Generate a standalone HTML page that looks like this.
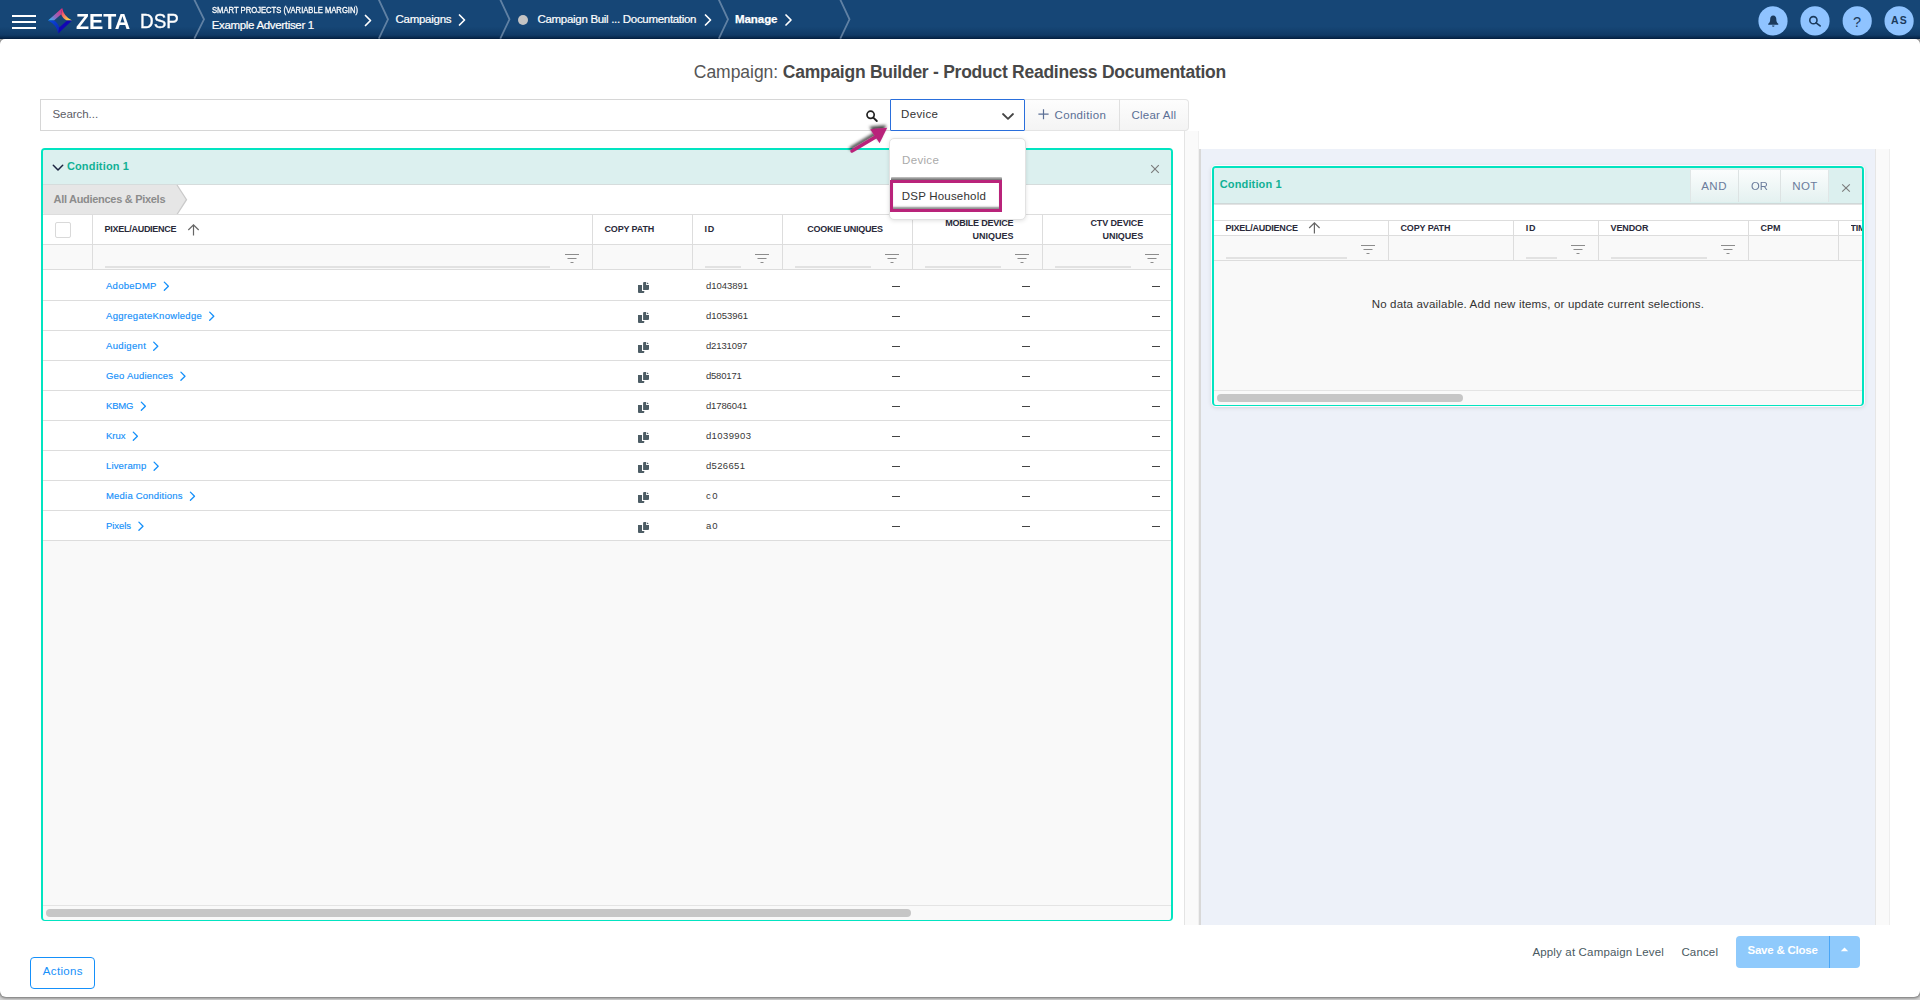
<!DOCTYPE html>
<html lang="en">
<head>
<meta charset="utf-8">
<title>Zeta DSP - Campaign Builder</title>
<style>
*{box-sizing:border-box;margin:0;padding:0}
html,body{width:1920px;height:1000px;overflow:hidden}
body{position:relative;background:#d4d4d4;font-family:"Liberation Sans",sans-serif;}
.a{position:absolute}
.t{position:absolute;white-space:pre;line-height:20px;font-family:"Liberation Sans",sans-serif;z-index:5}
#hdr{left:0;top:0;width:1920px;height:38.6px;background:linear-gradient(#164676 0,#164676 68%,#103a66 90%,#082a50 96%,#031c3c 100%)}
#page{left:0;top:38.6px;width:1920px;height:958.4px;background:#fff;border-radius:5px 5px 6px 6px;box-shadow:0 0 3px 0.5px rgba(0,0,0,.5)}
#shadow{left:0;top:980px;width:1920px;height:20px;background:#d4d4d4}
.hl{background:#ddd;height:1px}
.vl{background:#ddd;width:1px}
.ful{background:#e2e2e2;height:2px}
svg{position:absolute;overflow:visible}
</style>
</head>
<body>
<div class="a" id="shadow"></div>
<div class="a" id="page"></div>
<div class="a" id="hdr"></div>

<!-- ===== header ===== -->
<svg style="left:0;top:0" width="1920" height="40" viewBox="0 0 1920 40">
  <defs>
    <linearGradient id="g1" x1="48" y1="20.6" x2="62" y2="9" gradientUnits="userSpaceOnUse">
      <stop offset="0" stop-color="#1fc0ff"/><stop offset=".45" stop-color="#8f68c0"/><stop offset="1" stop-color="#e82c78"/>
    </linearGradient>
    <linearGradient id="g2" x1="62" y1="10" x2="71" y2="20.6" gradientUnits="userSpaceOnUse">
      <stop offset="0" stop-color="#e82c78"/><stop offset=".5" stop-color="#f98a5c"/><stop offset="1" stop-color="#fff23c"/>
    </linearGradient>
    <linearGradient id="g3" x1="48" y1="20.6" x2="59" y2="33" gradientUnits="userSpaceOnUse">
      <stop offset="0" stop-color="#0a4ad8"/><stop offset="1" stop-color="#0a22b8"/>
    </linearGradient>
  </defs>
  <!-- hamburger -->
  <rect x="12" y="15" width="24" height="2" fill="#fff"/>
  <rect x="12" y="21" width="24" height="2" fill="#fff"/>
  <rect x="12" y="27" width="24" height="2" fill="#fff"/>
  <!-- logo -->
  <path d="M48 20.6 L62.2 8 Q61.6 11.5 61.2 14.2 L54 20.6 Z" fill="url(#g1)"/>
  <path d="M62.2 8 Q63.5 16 72 20.6 L67.2 20.6 Q62.5 18.5 61.2 14.2 Z" fill="url(#g2)"/>
  <path d="M48 20.6 L54 20.6 Q58 23 59.2 27.6 L58.2 33.6 Q57 25 48 20.6 Z" fill="url(#g3)"/>
  <path d="M72 20.6 L58.2 33.6 L59.2 27.6 L67.2 20.6 Z" fill="#1206b4"/>
  <!-- big separators -->
  <g fill="none" stroke="#9fb2ca" stroke-opacity=".55" stroke-width="1.8">
    <path d="M194 -1 L204 19.3 L194.3 38.6"/>
    <path d="M378.5 -1 L388 19.3 L378.8 38.6"/>
    <path d="M500 -1 L509.5 19.3 L500.3 38.6"/>
    <path d="M718.5 -1 L728 19.3 L718.8 38.6"/>
    <path d="M840 -1 L849.5 19.3 L840.3 38.6"/>
  </g>
  <!-- small chevrons -->
  <g fill="none" stroke="#fff" stroke-width="1.7" stroke-linecap="round" stroke-linejoin="round">
    <path d="M365.5 15.5 L370.5 20.5 L365.5 25.5"/>
    <path d="M459.5 15 L464.5 20 L459.5 25"/>
    <path d="M705.5 15 L710.5 20 L705.5 25"/>
    <path d="M786 15 L791 20 L786 25"/>
  </g>
  <circle cx="523" cy="20" r="5" fill="#c4c4c4"/>
  <!-- right icons -->
  <g fill="#8fc3ff">
    <circle cx="1773" cy="20.9" r="14.6"/>
    <circle cx="1815" cy="20.9" r="14.6"/>
    <circle cx="1857.2" cy="20.9" r="14.6"/>
    <circle cx="1899.1" cy="20.9" r="14.6"/>
  </g>
  <!-- bell -->
  <path d="M1773.2 15.4 C1771 15.4 1770.2 17.2 1770.2 19 C1770.2 21.5 1769.6 22.8 1768.2 23.8 L1768.2 24.7 L1778.3 24.7 L1778.3 23.8 C1776.9 22.8 1776.3 21.5 1776.3 19 C1776.3 17.2 1775.4 15.4 1773.2 15.4 Z M1772 25.4 h2.5 a1.25 1.25 0 0 1 -2.5 0 z" fill="#1b3a5c"/>
  <!-- search -->
  <circle cx="1813.4" cy="20.2" r="3.6" fill="none" stroke="#1b3a5c" stroke-width="1.6"/>
  <path d="M1816.1 22.9 L1820.1 25.9" stroke="#1b3a5c" stroke-width="1.7" stroke-linecap="round"/>
</svg>
<span class="t" style="left:1852.9px;top:11.6px;font-size:14.5px;color:#1b3a5c;">?</span>

<!-- ===== toolbar ===== -->
<div class="a" style="left:40px;top:99px;width:851px;height:32px;border:1px solid #d6d6d6;background:#fff"></div>
<div class="a" style="left:1025px;top:99px;width:164px;height:32px;border:1px solid #e4e4e4;border-left:0;border-radius:0 4px 4px 0;background:linear-gradient(#fdfdfd,#f4f4f4)"></div>
<div class="a" style="left:1118.5px;top:99px;width:1px;height:32px;background:#e0e0e0"></div>
<div class="a" style="left:890px;top:99px;width:135px;height:32px;border:1.5px solid #2a6fdc;background:#fff;border-radius:1px"></div>
<svg style="left:0;top:0" width="1920" height="140" viewBox="0 0 1920 140">
  <circle cx="870.6" cy="114.8" r="3.6" fill="none" stroke="#222" stroke-width="1.7"/>
  <path d="M873.3 117.6 L876.8 121" stroke="#222" stroke-width="1.9" stroke-linecap="round"/>
  <path d="M1003 114 L1008 118.8 L1013 114" fill="none" stroke="#444" stroke-width="1.8" stroke-linecap="round" stroke-linejoin="round"/>
  <path d="M1038.4 114.2 H1048.6 M1043.5 109.2 V119.2" stroke="#5b6f95" stroke-width="1.2"/>
</svg>

<!-- ===== left panel ===== -->
<div class="a" style="left:41px;top:148px;width:1132px;height:773px;border:2px solid #02e4c1;border-bottom-width:1.3px;border-radius:4px;background:#f9f9f9"></div>
<div class="a" style="left:43px;top:150px;width:1128px;height:35px;background:#dcf0ef;border-bottom:1px solid #d5dcdc;border-radius:2px 2px 0 0"></div>
<div class="a" style="left:43px;top:185px;width:1128px;height:29.5px;background:#fff"></div>
<div class="a" style="left:43px;top:185px;width:134px;height:29.5px;background:#e6e6e6;border-radius:0 0 0 3px"></div>
<div class="a" style="left:43px;top:214.5px;width:1128px;height:30px;background:#fff"></div>
<div class="a" style="left:43px;top:270px;width:1128px;height:270.5px;background:#fff"></div>
<svg style="left:0;top:0" width="1920" height="1000" viewBox="0 0 1920 1000">
  <path d="M177 185 L186.5 199.7 L177 214.5 Z" fill="#e6e6e6"/>
  <path d="M177 185 L186.5 199.7 L177 214.5" fill="none" stroke="#cacaca" stroke-width="1.3"/>
  <path d="M53.3 165.3 L58 170 L62.7 165.3" fill="none" stroke="#1c2440" stroke-width="1.5" stroke-linecap="round" stroke-linejoin="round"/>
  <path d="M1151.2 165.2 L1158.8 172.9 M1158.8 165.2 L1151.2 172.9" stroke="#7c7c7c" stroke-width="1.15"/>
  <!-- sort arrow -->
  <path d="M193.5 235.5 V225 M188.3 230 L193.5 224.8 L198.7 230" fill="none" stroke="#666" stroke-width="1.2"/>
</svg>
<!-- checkbox -->
<div class="a" style="left:55px;top:222px;width:16px;height:16px;border:1px solid #d9d9d9;border-radius:2px;background:#fff"></div>
<!-- horizontal lines -->
<div class="a hl" style="left:43px;top:214px;width:1128px"></div>
<div class="a hl" style="left:43px;top:244px;width:1128px"></div>
<div class="a hl" style="left:43px;top:269px;width:1128px"></div>
<div class="a hl" style="left:43px;top:300px;width:1128px"></div>
<div class="a hl" style="left:43px;top:330px;width:1128px"></div>
<div class="a hl" style="left:43px;top:360px;width:1128px"></div>
<div class="a hl" style="left:43px;top:390px;width:1128px"></div>
<div class="a hl" style="left:43px;top:420px;width:1128px"></div>
<div class="a hl" style="left:43px;top:450px;width:1128px"></div>
<div class="a hl" style="left:43px;top:480px;width:1128px"></div>
<div class="a hl" style="left:43px;top:510px;width:1128px"></div>
<div class="a hl" style="left:43px;top:540px;width:1128px"></div>


<!-- vertical lines -->
<div class="a vl" style="left:92px;top:215px;height:55px"></div>
<div class="a vl" style="left:592px;top:215px;height:55px"></div>
<div class="a vl" style="left:692px;top:215px;height:55px"></div>
<div class="a vl" style="left:782px;top:215px;height:55px"></div>
<div class="a vl" style="left:912px;top:215px;height:55px"></div>
<div class="a vl" style="left:1042px;top:215px;height:55px"></div>
<!-- filter underlines -->
<div class="a ful" style="left:105px;top:266px;width:445px"></div>
<div class="a ful" style="left:705px;top:266px;width:36px"></div>
<div class="a ful" style="left:795px;top:266px;width:76px"></div>
<div class="a ful" style="left:925px;top:266px;width:76px"></div>
<div class="a ful" style="left:1055px;top:266px;width:76px"></div>
<svg style="left:565.0px;top:253.0px" width="14" height="11" viewBox="0 0 14 11"><path d="M0 1.5 H14 M2.5 5.5 H11.5 M5.5 9.5 H8.5" stroke="#8c8c8c" stroke-width="1" fill="none"/></svg>
<svg style="left:755.0px;top:253.0px" width="14" height="11" viewBox="0 0 14 11"><path d="M0 1.5 H14 M2.5 5.5 H11.5 M5.5 9.5 H8.5" stroke="#8c8c8c" stroke-width="1" fill="none"/></svg>
<svg style="left:885.0px;top:253.0px" width="14" height="11" viewBox="0 0 14 11"><path d="M0 1.5 H14 M2.5 5.5 H11.5 M5.5 9.5 H8.5" stroke="#8c8c8c" stroke-width="1" fill="none"/></svg>
<svg style="left:1015.0px;top:253.0px" width="14" height="11" viewBox="0 0 14 11"><path d="M0 1.5 H14 M2.5 5.5 H11.5 M5.5 9.5 H8.5" stroke="#8c8c8c" stroke-width="1" fill="none"/></svg>
<svg style="left:1145.0px;top:253.0px" width="14" height="11" viewBox="0 0 14 11"><path d="M0 1.5 H14 M2.5 5.5 H11.5 M5.5 9.5 H8.5" stroke="#8c8c8c" stroke-width="1" fill="none"/></svg>


<svg style="left:0;top:0" width="1920" height="1000" viewBox="0 0 1920 1000">
<path d="M164.3 282.1 l4.1 4.1 l-4.1 4.1" fill="none" stroke="#1590fa" stroke-width="1.3" stroke-linecap="round" stroke-linejoin="round"/>
<g transform="translate(0 0)" fill="#4d5d65"><path d="M638 285 H642 V290.9 H644.3 V292 Q644.3 293 643.3 293 H639 Q638 293 638 292 Z"/><path d="M643.1 283 Q643.1 282 644.1 282 H646.1 V284.9 H649 V289.1 Q649 290.1 648 290.1 H643.1 Z"/><path d="M646.9 282.2 L648.8 284.1 H646.9 Z"/></g>
<rect x="892" y="286.0" width="8" height="1" fill="#444"/>
<rect x="1022" y="286.0" width="8" height="1" fill="#444"/>
<rect x="1152" y="286.0" width="8" height="1" fill="#444"/>
<path d="M209.7 312.1 l4.1 4.1 l-4.1 4.1" fill="none" stroke="#1590fa" stroke-width="1.3" stroke-linecap="round" stroke-linejoin="round"/>
<g transform="translate(0 30)" fill="#4d5d65"><path d="M638 285 H642 V290.9 H644.3 V292 Q644.3 293 643.3 293 H639 Q638 293 638 292 Z"/><path d="M643.1 283 Q643.1 282 644.1 282 H646.1 V284.9 H649 V289.1 Q649 290.1 648 290.1 H643.1 Z"/><path d="M646.9 282.2 L648.8 284.1 H646.9 Z"/></g>
<rect x="892" y="316.0" width="8" height="1" fill="#444"/>
<rect x="1022" y="316.0" width="8" height="1" fill="#444"/>
<rect x="1152" y="316.0" width="8" height="1" fill="#444"/>
<path d="M153.7 342.1 l4.1 4.1 l-4.1 4.1" fill="none" stroke="#1590fa" stroke-width="1.3" stroke-linecap="round" stroke-linejoin="round"/>
<g transform="translate(0 60)" fill="#4d5d65"><path d="M638 285 H642 V290.9 H644.3 V292 Q644.3 293 643.3 293 H639 Q638 293 638 292 Z"/><path d="M643.1 283 Q643.1 282 644.1 282 H646.1 V284.9 H649 V289.1 Q649 290.1 648 290.1 H643.1 Z"/><path d="M646.9 282.2 L648.8 284.1 H646.9 Z"/></g>
<rect x="892" y="346.0" width="8" height="1" fill="#444"/>
<rect x="1022" y="346.0" width="8" height="1" fill="#444"/>
<rect x="1152" y="346.0" width="8" height="1" fill="#444"/>
<path d="M180.9 372.1 l4.1 4.1 l-4.1 4.1" fill="none" stroke="#1590fa" stroke-width="1.3" stroke-linecap="round" stroke-linejoin="round"/>
<g transform="translate(0 90)" fill="#4d5d65"><path d="M638 285 H642 V290.9 H644.3 V292 Q644.3 293 643.3 293 H639 Q638 293 638 292 Z"/><path d="M643.1 283 Q643.1 282 644.1 282 H646.1 V284.9 H649 V289.1 Q649 290.1 648 290.1 H643.1 Z"/><path d="M646.9 282.2 L648.8 284.1 H646.9 Z"/></g>
<rect x="892" y="376.0" width="8" height="1" fill="#444"/>
<rect x="1022" y="376.0" width="8" height="1" fill="#444"/>
<rect x="1152" y="376.0" width="8" height="1" fill="#444"/>
<path d="M141.3 402.1 l4.1 4.1 l-4.1 4.1" fill="none" stroke="#1590fa" stroke-width="1.3" stroke-linecap="round" stroke-linejoin="round"/>
<g transform="translate(0 120)" fill="#4d5d65"><path d="M638 285 H642 V290.9 H644.3 V292 Q644.3 293 643.3 293 H639 Q638 293 638 292 Z"/><path d="M643.1 283 Q643.1 282 644.1 282 H646.1 V284.9 H649 V289.1 Q649 290.1 648 290.1 H643.1 Z"/><path d="M646.9 282.2 L648.8 284.1 H646.9 Z"/></g>
<rect x="892" y="406.0" width="8" height="1" fill="#444"/>
<rect x="1022" y="406.0" width="8" height="1" fill="#444"/>
<rect x="1152" y="406.0" width="8" height="1" fill="#444"/>
<path d="M133.3 432.1 l4.1 4.1 l-4.1 4.1" fill="none" stroke="#1590fa" stroke-width="1.3" stroke-linecap="round" stroke-linejoin="round"/>
<g transform="translate(0 150)" fill="#4d5d65"><path d="M638 285 H642 V290.9 H644.3 V292 Q644.3 293 643.3 293 H639 Q638 293 638 292 Z"/><path d="M643.1 283 Q643.1 282 644.1 282 H646.1 V284.9 H649 V289.1 Q649 290.1 648 290.1 H643.1 Z"/><path d="M646.9 282.2 L648.8 284.1 H646.9 Z"/></g>
<rect x="892" y="436.0" width="8" height="1" fill="#444"/>
<rect x="1022" y="436.0" width="8" height="1" fill="#444"/>
<rect x="1152" y="436.0" width="8" height="1" fill="#444"/>
<path d="M154.1 462.1 l4.1 4.1 l-4.1 4.1" fill="none" stroke="#1590fa" stroke-width="1.3" stroke-linecap="round" stroke-linejoin="round"/>
<g transform="translate(0 180)" fill="#4d5d65"><path d="M638 285 H642 V290.9 H644.3 V292 Q644.3 293 643.3 293 H639 Q638 293 638 292 Z"/><path d="M643.1 283 Q643.1 282 644.1 282 H646.1 V284.9 H649 V289.1 Q649 290.1 648 290.1 H643.1 Z"/><path d="M646.9 282.2 L648.8 284.1 H646.9 Z"/></g>
<rect x="892" y="466.0" width="8" height="1" fill="#444"/>
<rect x="1022" y="466.0" width="8" height="1" fill="#444"/>
<rect x="1152" y="466.0" width="8" height="1" fill="#444"/>
<path d="M190.4 492.1 l4.1 4.1 l-4.1 4.1" fill="none" stroke="#1590fa" stroke-width="1.3" stroke-linecap="round" stroke-linejoin="round"/>
<g transform="translate(0 210)" fill="#4d5d65"><path d="M638 285 H642 V290.9 H644.3 V292 Q644.3 293 643.3 293 H639 Q638 293 638 292 Z"/><path d="M643.1 283 Q643.1 282 644.1 282 H646.1 V284.9 H649 V289.1 Q649 290.1 648 290.1 H643.1 Z"/><path d="M646.9 282.2 L648.8 284.1 H646.9 Z"/></g>
<rect x="892" y="496.0" width="8" height="1" fill="#444"/>
<rect x="1022" y="496.0" width="8" height="1" fill="#444"/>
<rect x="1152" y="496.0" width="8" height="1" fill="#444"/>
<path d="M138.9 522.1 l4.1 4.1 l-4.1 4.1" fill="none" stroke="#1590fa" stroke-width="1.3" stroke-linecap="round" stroke-linejoin="round"/>
<g transform="translate(0 240)" fill="#4d5d65"><path d="M638 285 H642 V290.9 H644.3 V292 Q644.3 293 643.3 293 H639 Q638 293 638 292 Z"/><path d="M643.1 283 Q643.1 282 644.1 282 H646.1 V284.9 H649 V289.1 Q649 290.1 648 290.1 H643.1 Z"/><path d="M646.9 282.2 L648.8 284.1 H646.9 Z"/></g>
<rect x="892" y="526.0" width="8" height="1" fill="#444"/>
<rect x="1022" y="526.0" width="8" height="1" fill="#444"/>
<rect x="1152" y="526.0" width="8" height="1" fill="#444"/>
</svg>


<!-- bottom scrollbar -->
<div class="a hl" style="left:43px;top:905px;width:1128px;background:#e4e4e4"></div>
<div class="a" style="left:46px;top:909px;width:865px;height:8px;border-radius:4px;background:#c6c6c6"></div>

<!-- ===== splitter & right panel ===== -->
<div class="a" style="left:1184px;top:131px;width:15px;height:794px;background:#fafafa;border-left:1px solid #e4e4e4;border-right:1px solid #f0f0f0"></div>
<div class="a" style="left:1199px;top:149px;width:676px;height:776px;background:#edf1f9;border-left:2px solid #d8d8d8"></div>
<div class="a" style="left:1875px;top:149px;width:15px;height:776px;background:#fafafa;border-left:1px solid #e6e6e6;border-right:1px solid #eee"></div>
<!-- right card -->
<div class="a" style="left:1212px;top:166px;width:1652px;max-width:652px;height:240.2px;border:2px solid #02e4c1;border-bottom-width:1.2px;border-radius:4px;background:#f9f9f9;box-shadow:0 0 0 1px rgba(255,255,255,.9),0 1px 5px rgba(0,0,0,.16)"></div>
<div class="a" style="left:1214px;top:168px;width:648px;height:36px;background:#dcf0ef;border-bottom:1px solid #cfd8d8;box-shadow:0 1px 2px rgba(0,0,0,.12);border-radius:2px 2px 0 0"></div>
<div class="a" style="left:1214px;top:204.5px;width:648px;height:31px;background:#fff"></div>
<div class="a" style="left:1689.5px;top:169.5px;width:139.5px;height:32.5px;background:linear-gradient(#fbfdfd,#e4f1f0);border-left:1px solid #e0e6e6;border-right:1px solid #e0e6e6"></div>
<div class="a" style="left:1738px;top:169.5px;width:1px;height:32.5px;background:#dde3e3"></div>
<div class="a" style="left:1780px;top:169.5px;width:1px;height:32.5px;background:#dde3e3"></div>
<div class="a hl" style="left:1214px;top:220px;width:648px"></div>
<div class="a hl" style="left:1214px;top:235px;width:648px"></div>
<div class="a hl" style="left:1214px;top:260px;width:648px"></div>
<div class="a hl" style="left:1214px;top:390px;width:648px;background:#e4e4e4"></div>
<div class="a vl" style="left:1388px;top:221px;height:39px"></div>
<div class="a vl" style="left:1513px;top:221px;height:39px"></div>
<div class="a vl" style="left:1598px;top:221px;height:39px"></div>
<div class="a vl" style="left:1748px;top:221px;height:39px"></div>
<div class="a vl" style="left:1838px;top:221px;height:39px"></div>
<div class="a ful" style="left:1226px;top:257px;width:121px;height:1.5px"></div>
<div class="a ful" style="left:1526px;top:257px;width:31px;height:1.5px"></div>
<div class="a ful" style="left:1611px;top:257px;width:96px;height:1.5px"></div>
<div class="a" style="left:1217px;top:394px;width:246px;height:8px;border-radius:4px;background:#c6c6c6"></div>
<div class="a" style="left:1851px;top:217.8px;width:11px;height:20px;overflow:hidden"><span class="t" style="left:-0.5px;top:0;font-size:9px;font-weight:700;color:#2a2a3a;letter-spacing:-.2px">TIME</span></div>
<svg style="left:0;top:0" width="1920" height="420" viewBox="0 0 1920 420">
  <path d="M1842.2 184.3 L1849.8 191.6 M1849.8 184.3 L1842.2 191.6" stroke="#7c7c7c" stroke-width="1.15"/>
  <path d="M1314.4 233.5 V223 M1309.2 228 L1314.4 222.8 L1319.6 228" fill="none" stroke="#666" stroke-width="1.2"/>
</svg>
<svg style="left:1361.0px;top:244.0px" width="14" height="11" viewBox="0 0 14 11"><path d="M0 1.5 H14 M2.5 5.5 H11.5 M5.5 9.5 H8.5" stroke="#8c8c8c" stroke-width="1" fill="none"/></svg>
<svg style="left:1571.0px;top:244.0px" width="14" height="11" viewBox="0 0 14 11"><path d="M0 1.5 H14 M2.5 5.5 H11.5 M5.5 9.5 H8.5" stroke="#8c8c8c" stroke-width="1" fill="none"/></svg>
<svg style="left:1721.0px;top:244.0px" width="14" height="11" viewBox="0 0 14 11"><path d="M0 1.5 H14 M2.5 5.5 H11.5 M5.5 9.5 H8.5" stroke="#8c8c8c" stroke-width="1" fill="none"/></svg>



<!-- ===== bottom bar ===== -->
<div class="a" style="left:30px;top:957px;width:65px;height:32px;border:1.5px solid #1590fa;border-radius:4px;background:#fff"></div>
<div class="a" style="left:1736px;top:936px;width:124px;height:32px;border-radius:4px;background:#8fcafc"></div>
<div class="a" style="left:1829px;top:936px;width:1px;height:32px;background:#4aa6f6"></div>
<svg style="left:0;top:0" width="1920" height="1000" viewBox="0 0 1920 1000"><path d="M1840.8 951.2 L1844.5 947.6 L1848.2 951.2 Z" fill="#fff"/></svg>

<!-- ===== dropdown overlay ===== -->
<div class="a" style="left:889px;top:138px;width:137px;height:81.5px;background:#fff;border:1px solid #e2e2e2;border-radius:5px;box-shadow:0 1px 4px rgba(0,0,0,.12);z-index:20"></div>
<div class="a" style="left:890.5px;top:177px;width:111.5px;height:5px;background:linear-gradient(#c8c8c8,#6a6a6a 60%,#555);z-index:21;border-radius:1px 1px 0 0"></div>
<div class="a" style="left:890px;top:180px;width:112px;height:32px;border:3px solid #b9237a;background:#fff;z-index:22;box-shadow:inset 0 -3px 2px -1px rgba(0,0,0,.45)"></div>
<svg style="left:0;top:0;z-index:25" width="1920" height="240" viewBox="0 0 1920 240">
  <defs><filter id="sh" x="-30%" y="-30%" width="160%" height="160%"><feDropShadow dx="-0.8" dy="-2.6" stdDeviation="1.5" flood-color="#000" flood-opacity=".75"/></filter></defs>
  <g filter="url(#sh)">
    <path d="M852 151 L876 136.8" stroke="#b9237a" stroke-width="3.5" stroke-linecap="round"/>
    <path d="M870.2 129.3 L887.2 127.8 L879.6 143.2 Z" fill="#b9237a"/>
  </g>
</svg>

<span class="t" style="left:76.1px;top:12.00px;font-size:22.5px;font-weight:700;color:#fff;transform-origin:0 50%;transform:scaleX(0.9478);">ZETA</span>
<span class="t" style="left:139.5px;top:11.00px;font-size:20.5px;font-weight:400;color:#fff;transform-origin:0 50%;transform:scaleX(0.9204);-webkit-text-stroke:.35px #fff;">DSP</span>
<span class="t" style="left:211.5px;top:0.00px;font-size:9px;font-weight:400;color:#fff;transform-origin:0 50%;transform:scaleX(0.8487);-webkit-text-stroke:.3px #fff;">SMART PROJECTS (VARIABLE MARGIN)</span>
<span class="t" style="left:211.7px;top:15.00px;font-size:11.5px;font-weight:400;color:#fff;letter-spacing:-0.325px;-webkit-text-stroke:.2px #fff;">Example Advertiser 1</span>
<span class="t" style="left:395.5px;top:9.00px;font-size:11.5px;font-weight:400;color:#fff;letter-spacing:-0.271px;-webkit-text-stroke:.2px #fff;">Campaigns</span>
<span class="t" style="left:537.5px;top:9.00px;font-size:11.5px;font-weight:400;color:#fff;letter-spacing:-0.304px;-webkit-text-stroke:.2px #fff;">Campaign Buil ... Documentation</span>
<span class="t" style="left:735.0px;top:9.00px;font-size:11.5px;font-weight:700;color:#fff;letter-spacing:-0.066px;-webkit-text-stroke:.25px #fff;">Manage</span>
<span class="t" style="left:1891.0px;top:10.00px;font-size:10.5px;font-weight:700;color:#1b3a5c;letter-spacing:1.206px;">AS</span>
<span class="t" style="left:693.8px;top:62.00px;font-size:17.5px;font-weight:400;color:#555;letter-spacing:-0.030px;">Campaign:</span>
<span class="t" style="left:782.8px;top:62.00px;font-size:17.5px;font-weight:700;color:#484848;letter-spacing:-0.258px;">Campaign Builder - Product Readiness Documentation</span>
<span class="t" style="left:52.5px;top:104.00px;font-size:11.5px;font-weight:400;color:#5c5c66;letter-spacing:-0.054px;">Search...</span>
<span class="t" style="left:901.0px;top:104.00px;font-size:11.5px;font-weight:400;color:#333;letter-spacing:0.369px;">Device</span>
<span class="t" style="left:1054.5px;top:105.00px;font-size:11.5px;font-weight:400;color:#5b6f95;letter-spacing:0.338px;">Condition</span>
<span class="t" style="left:1131.5px;top:105.00px;font-size:11.5px;font-weight:400;color:#5b6f95;letter-spacing:0.221px;">Clear All</span>
<span class="t" style="left:66.9px;top:156.00px;font-size:11px;font-weight:700;color:#11b095;letter-spacing:0.160px;">Condition 1</span>
<span class="t" style="left:53.5px;top:189.00px;font-size:11px;font-weight:700;color:#8c8c8c;letter-spacing:-0.295px;">All Audiences &amp; Pixels</span>
<span class="t" style="left:104.6px;top:219.00px;font-size:9px;font-weight:700;color:#2a2a3a;letter-spacing:-0.278px;">PIXEL/AUDIENCE</span>
<span class="t" style="left:604.5px;top:219.00px;font-size:9px;font-weight:700;color:#2a2a3a;letter-spacing:-0.152px;">COPY PATH</span>
<span class="t" style="left:704.5px;top:219.00px;font-size:9px;font-weight:700;color:#2a2a3a;letter-spacing:0.800px;">ID</span>
<span class="t" style="left:807.3px;top:219.00px;font-size:9px;font-weight:700;color:#2a2a3a;letter-spacing:-0.255px;">COOKIE UNIQUES</span>
<span class="t" style="left:945.3px;top:213.00px;font-size:9px;font-weight:700;color:#2a2a3a;letter-spacing:-0.235px;">MOBILE DEVICE</span>
<span class="t" style="left:972.5px;top:226.00px;font-size:9px;font-weight:700;color:#2a2a3a;letter-spacing:-0.003px;">UNIQUES</span>
<span class="t" style="left:1090.5px;top:213.00px;font-size:9px;font-weight:700;color:#2a2a3a;letter-spacing:-0.146px;">CTV DEVICE</span>
<span class="t" style="left:1102.5px;top:226.00px;font-size:9px;font-weight:700;color:#2a2a3a;letter-spacing:-0.053px;">UNIQUES</span>
<span class="t" style="left:106.0px;top:276.00px;font-size:9.5px;font-weight:400;color:#1590fa;letter-spacing:0.258px;-webkit-text-stroke:.15px #1590fa;">AdobeDMP</span>
<span class="t" style="left:705.9px;top:276.00px;font-size:9.5px;font-weight:400;color:#383838;letter-spacing:-0.026px;">d1043891</span>
<span class="t" style="left:106.0px;top:306.00px;font-size:9.5px;font-weight:400;color:#1590fa;letter-spacing:0.291px;-webkit-text-stroke:.15px #1590fa;">AggregateKnowledge</span>
<span class="t" style="left:705.9px;top:306.00px;font-size:9.5px;font-weight:400;color:#383838;letter-spacing:-0.026px;">d1053961</span>
<span class="t" style="left:106.0px;top:336.00px;font-size:9.5px;font-weight:400;color:#1590fa;letter-spacing:0.326px;-webkit-text-stroke:.15px #1590fa;">Audigent</span>
<span class="t" style="left:705.9px;top:336.00px;font-size:9.5px;font-weight:400;color:#383838;letter-spacing:-0.112px;">d2131097</span>
<span class="t" style="left:106.0px;top:366.00px;font-size:9.5px;font-weight:400;color:#1590fa;letter-spacing:0.214px;-webkit-text-stroke:.15px #1590fa;">Geo Audiences</span>
<span class="t" style="left:705.9px;top:366.00px;font-size:9.5px;font-weight:400;color:#383838;letter-spacing:-0.181px;">d580171</span>
<span class="t" style="left:106.0px;top:396.00px;font-size:9.5px;font-weight:400;color:#1590fa;letter-spacing:-0.195px;-webkit-text-stroke:.15px #1590fa;">KBMG</span>
<span class="t" style="left:705.9px;top:396.00px;font-size:9.5px;font-weight:400;color:#383838;letter-spacing:-0.112px;">d1786041</span>
<span class="t" style="left:106.0px;top:426.00px;font-size:9.5px;font-weight:400;color:#1590fa;letter-spacing:-0.049px;-webkit-text-stroke:.15px #1590fa;">Krux</span>
<span class="t" style="left:705.9px;top:426.00px;font-size:9.5px;font-weight:400;color:#383838;letter-spacing:0.403px;">d1039903</span>
<span class="t" style="left:106.0px;top:456.00px;font-size:9.5px;font-weight:400;color:#1590fa;letter-spacing:0.160px;-webkit-text-stroke:.15px #1590fa;">Liveramp</span>
<span class="t" style="left:705.9px;top:456.00px;font-size:9.5px;font-weight:400;color:#383838;letter-spacing:0.353px;">d526651</span>
<span class="t" style="left:106.0px;top:486.00px;font-size:9.5px;font-weight:400;color:#1590fa;letter-spacing:0.206px;-webkit-text-stroke:.15px #1590fa;">Media Conditions</span>
<span class="t" style="left:705.9px;top:486.00px;font-size:9.5px;font-weight:400;color:#383838;letter-spacing:1.553px;">c0</span>
<span class="t" style="left:106.0px;top:516.00px;font-size:9.5px;font-weight:400;color:#1590fa;letter-spacing:-0.069px;-webkit-text-stroke:.15px #1590fa;">Pixels</span>
<span class="t" style="left:705.9px;top:516.00px;font-size:9.5px;font-weight:400;color:#383838;letter-spacing:1.022px;">a0</span>
<span class="t" style="left:1219.7px;top:174.00px;font-size:11px;font-weight:700;color:#11b095;letter-spacing:0.150px;">Condition 1</span>
<span class="t" style="left:1701.2px;top:176.00px;font-size:11.5px;font-weight:400;color:#6b7c9c;letter-spacing:0.509px;">AND</span>
<span class="t" style="left:1751.0px;top:176.00px;font-size:11.5px;font-weight:400;color:#6b7c9c;transform-origin:0 50%;transform:scaleX(0.9797);">OR</span>
<span class="t" style="left:1792.3px;top:176.00px;font-size:11.5px;font-weight:400;color:#6b7c9c;letter-spacing:0.359px;">NOT</span>
<span class="t" style="left:1225.5px;top:218.00px;font-size:9px;font-weight:700;color:#2a2a3a;letter-spacing:-0.240px;">PIXEL/AUDIENCE</span>
<span class="t" style="left:1400.5px;top:218.00px;font-size:9px;font-weight:700;color:#2a2a3a;letter-spacing:-0.127px;">COPY PATH</span>
<span class="t" style="left:1525.7px;top:218.00px;font-size:9px;font-weight:700;color:#2a2a3a;letter-spacing:0.800px;">ID</span>
<span class="t" style="left:1610.5px;top:218.00px;font-size:9px;font-weight:700;color:#2a2a3a;letter-spacing:-0.103px;">VENDOR</span>
<span class="t" style="left:1760.5px;top:218.00px;font-size:9px;font-weight:700;color:#2a2a3a;letter-spacing:0.000px;">CPM</span>
<span class="t" style="left:1371.7px;top:294.00px;font-size:11.5px;font-weight:400;color:#333;letter-spacing:0.173px;">No data available. Add new items, or update current selections.</span>
<span class="t" style="left:42.8px;top:961.00px;font-size:11.5px;font-weight:400;color:#1590fa;letter-spacing:0.330px;">Actions</span>
<span class="t" style="left:1532.4px;top:942.00px;font-size:11.5px;font-weight:400;color:#4a5a62;letter-spacing:0.165px;">Apply at Campaign Level</span>
<span class="t" style="left:1681.4px;top:942.00px;font-size:11.5px;font-weight:400;color:#4a5a62;letter-spacing:0.157px;">Cancel</span>
<span class="t" style="left:1747.5px;top:940.00px;font-size:11.5px;font-weight:700;color:#fff;letter-spacing:-0.225px;">Save &amp; Close</span>
<span class="t" style="left:902.1px;top:150.00px;font-size:11.5px;font-weight:400;color:#aaa;letter-spacing:0.309px;z-index:30;">Device</span>
<span class="t" style="left:901.8px;top:186.00px;font-size:11.5px;font-weight:400;color:#333;letter-spacing:0.198px;z-index:30;">DSP Household</span>
</body>
</html>
